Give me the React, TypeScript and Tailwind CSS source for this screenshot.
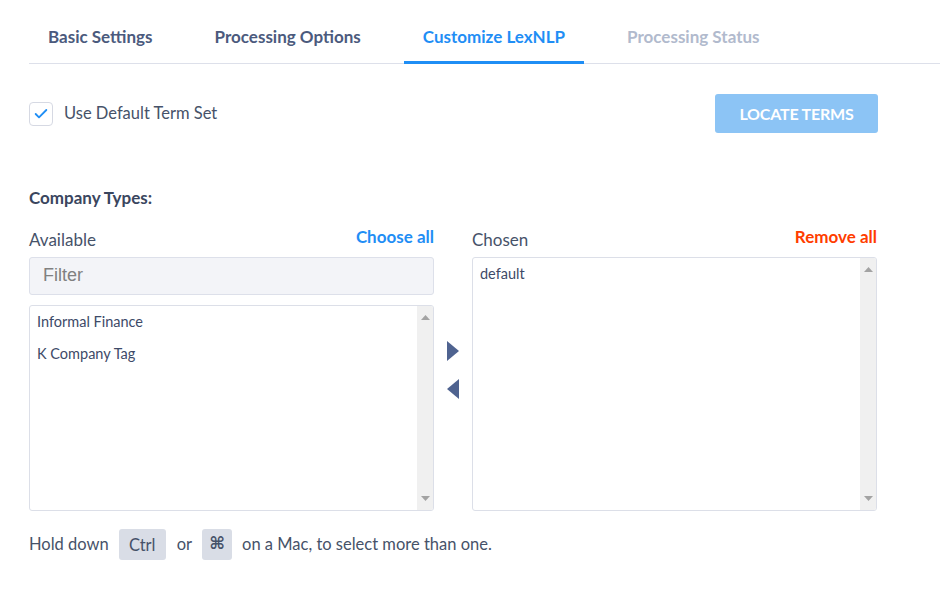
import { Check } from 'lucide-react';

const tabs = [
  { label: 'Basic Settings', state: 'normal' },
  { label: 'Processing Options', state: 'normal' },
  { label: 'Customize LexNLP', state: 'active' },
  { label: 'Processing Status', state: 'disabled' },
];

function Scrollbar() {
  return (
    <div className="w-4 bg-[#f0f0f0] flex flex-col justify-between items-center py-[9px]">
      <svg width="9" height="5" viewBox="0 0 9 5">
        <path d="M0 5 L4.5 0 L9 5 Z" fill="#a3a3a3" />
      </svg>
      <svg width="9" height="5" viewBox="0 0 9 5">
        <path d="M0 0 L4.5 5 L9 0 Z" fill="#a3a3a3" />
      </svg>
    </div>
  );
}

function ListBox({ items, className }: { items: string[]; className: string }) {
  return (
    <div className={`flex border border-[#dcdfe8] rounded-[3px] bg-white overflow-hidden ${className}`}>
      <div className="flex-1 px-[7px] pt-[6px] text-[14.5px] text-[#3d4a68]">
        {items.map((item) => (
          <div key={item} className="h-8 leading-5">
            {item}
          </div>
        ))}
      </div>
      <Scrollbar />
    </div>
  );
}

export default function App() {
  return (
    <div className="w-[940px] h-[592px] bg-white font-['Lato',sans-serif] text-[#4a5570]">
      <div className="pl-[29px]">
        {/* tabs */}
        <div className="flex gap-[24px] border-b border-[#dde0ea] h-16">
          {tabs.map((t) => (
            <div
              key={t.label}
              className={`px-[19px] pt-[24px] text-[17px] font-bold ${
                t.state === 'active'
                  ? 'text-[#1f8ef5] border-b-[3px] border-[#1f8ef5] -mb-px'
                  : t.state === 'disabled'
                  ? 'text-[#b1bacd]'
                  : 'text-[#4b5a7d]'
              }`}
            >
              {t.label}
            </div>
          ))}
        </div>

        {/* default term set + button */}
        <div className="flex items-center justify-between w-[849px] mt-[30px]">
          <label className="flex items-center gap-[11px]">
            <span className="w-6 h-6 border border-[#d6d9e3] rounded-[4px] flex items-center justify-center">
              <Check className="w-4 h-4 text-[#1f8ef5]" strokeWidth={2.75} />
            </span>
            <span className="text-[16.5px] text-[#465269]">Use Default Term Set</span>
          </label>
          <button className="w-[163px] h-[39px] bg-[#8cc4f5] rounded-[3px] text-white text-[16px] font-bold tracking-[-0.2px]">
            LOCATE TERMS
          </button>
        </div>

        <div className="mt-[52px] text-[17px] font-bold text-[#3a465e]">Company Types:</div>

        {/* selector */}
        <div className="flex mt-[16px]">
          <div className="w-[405px]">
            <div className="flex justify-between items-end h-[27px]">
              <span className="text-[17px] text-[#465269] mb-[1px]">Available</span>
              <span className="text-[17px] font-bold text-[#1f8ef5] mb-[4px]">Choose all</span>
            </div>
            <div className="mt-[3px] h-[38px] bg-[#f3f4f8] border border-[#dde0ea] rounded-[3px] flex items-center px-[13px] font-['Liberation_Sans',sans-serif] text-[18px] text-[#808080]">
              Filter
            </div>
            <ListBox items={['Informal Finance', 'K Company Tag']} className="mt-[10px] h-[206px]" />
          </div>

          <div className="w-[38px] flex flex-col items-center pt-[114px] gap-[18px]">
            <svg width="12" height="20" viewBox="0 0 12 20">
              <path d="M0 0 L12 10 L0 20 Z" fill="#4f6390" />
            </svg>
            <svg width="12" height="20" viewBox="0 0 12 20">
              <path d="M12 0 L0 10 L12 20 Z" fill="#4f6390" />
            </svg>
          </div>

          <div className="w-[405px]">
            <div className="flex justify-between items-end h-[27px]">
              <span className="text-[17px] text-[#465269] mb-[1px]">Chosen</span>
              <span className="text-[17px] font-bold text-[#ff3d00] mb-[4px]">Remove all</span>
            </div>
            <ListBox items={['default']} className="mt-[3px] h-[254px]" />
          </div>
        </div>

        {/* hint */}
        <div className="flex items-center mt-[18px] text-[16.5px] text-[#465269]">
          <span>Hold down</span>
          <span className="ml-[10px] h-[31px] w-[47px] bg-[#d9dde6] rounded-[3px] flex items-center justify-center text-[16.5px] pt-[2px]">
            Ctrl
          </span>
          <span className="ml-[11px]">or</span>
          <span className="ml-[10px] h-[31px] w-[30px] bg-[#d9dde6] rounded-[3px] flex items-center justify-center text-[17px] font-bold font-['DejaVu_Sans',sans-serif]">
            ⌘
          </span>
          <span className="ml-[10px]">on a Mac, to select more than one.</span>
        </div>
      </div>
    </div>
  );
}
